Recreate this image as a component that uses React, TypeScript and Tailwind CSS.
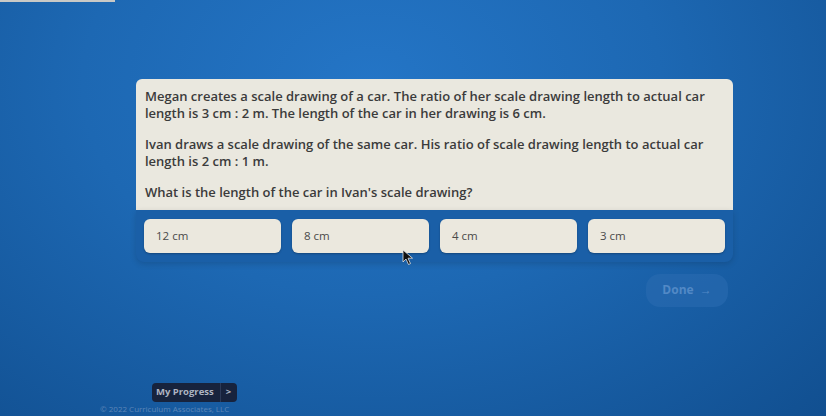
const answers = ['12 cm', '8 cm', '4 cm', '3 cm']

function Cursor() {
  return (
    <svg className="absolute left-[402px] top-[249px]" width="12" height="17" viewBox="0 0 12 17">
      <path d="M1 1 L1 13 L4 10 L6.5 15.5 L8.5 14.6 L6 9.2 L10.5 9.2 Z" fill="#111" stroke="#e5e5e5" strokeWidth="0.8" />
    </svg>
  )
}

export default function App() {
  return (
    <div
      className="relative h-[416px] w-[826px] overflow-hidden bg-[radial-gradient(ellipse_at_45%_20%,#2475c6_0%,#1d68b3_45%,#114f90_100%)]"
      style={{ fontFamily: '"Open Sans", "Noto Sans", sans-serif' }}
    >
      <div className="h-[2px] w-[115px] bg-[#c9c9c6]" />

      <div className="ml-[136px] mt-[77px] w-[597px]">
        <div className="rounded-t-[6px] bg-[#eae8df] px-[9px] pb-[9px] pt-[9px] text-[13px] font-semibold leading-[16.5px] text-[#3b3b3b]">
          <p>
            Megan creates a scale drawing of a car. The ratio of her scale drawing length to actual car length is 3 cm : 2 m. The length of the car in her drawing is 6 cm.
          </p>
          <p className="mt-[15px]">
            Ivan draws a scale drawing of the same car. His ratio of scale drawing length to actual car length is 2 cm : 1 m.
          </p>
          <p className="mt-[15px]">What is the length of the car in Ivan's scale drawing?</p>
        </div>

        <div className="grid grid-cols-4 gap-[11px] rounded-b-[8px] bg-[#1a5fa7] px-[8px] pb-[9px] pt-[9px] shadow-[0_2px_6px_rgba(0,0,0,0.15)]">
          {answers.map((a) => (
            <div
              key={a}
              className="flex h-[34px] items-center rounded-[6px] bg-[#ebe8de] pl-[12px] text-[11.5px] font-medium text-[#4a4a4a] shadow-[0_1px_2px_rgba(0,0,0,0.25)]"
            >
              {a}
            </div>
          ))}
        </div>

        <div className="mt-[12px] flex justify-end pr-[5px]">
          <div className="flex h-[33px] w-[82px] items-center justify-center gap-[6px] rounded-[14px] bg-[#2a6bb0]/60 text-[12px] font-bold text-[#5289c6]">
            <span>Done</span>
            <span>→</span>
          </div>
        </div>
      </div>

      <div className="ml-[152px] mt-[76px] flex h-[19px] w-[85px] items-center rounded-[4px] bg-[#17233d] text-[9.5px] font-bold text-[#aeb5c2]">
        <span className="pl-[4px] pr-[6px]">My Progress</span>
        <span className="h-full w-px bg-[#2c3a58]" />
        <span className="pl-[5px]">&gt;</span>
      </div>

      <p className="ml-[100px] mt-[2px] text-[8px] leading-[10px] text-[#5c86b8]">© 2022 Curriculum Associates, LLC</p>

      <Cursor />
    </div>
  )
}
